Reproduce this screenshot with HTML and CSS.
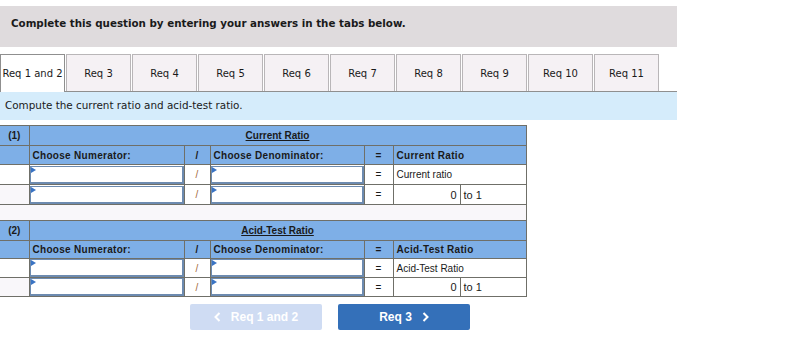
FILE: index.html
```html
<!DOCTYPE html>
<html lang="en">
<head>
  <meta charset="UTF-8">
  <title>Req 1 and 2</title>
  <link rel="stylesheet" href="styles.css">
</head>
<body>
  <div class="page">
    <div class="banner">Complete this question by entering your answers in the tabs below.</div>

    <div class="tabs">
      <div class="tab active">Req 1 and 2</div>
      <div class="tab">Req 3</div>
      <div class="tab">Req 4</div>
      <div class="tab">Req 5</div>
      <div class="tab">Req 6</div>
      <div class="tab">Req 7</div>
      <div class="tab">Req 8</div>
      <div class="tab">Req 9</div>
      <div class="tab">Req 10</div>
      <div class="tab">Req 11</div>
    </div>

    <div class="instructions">Compute the current ratio and acid-test ratio.</div>

    <table class="ratio-table">
      <colgroup>
        <col class="c-label">
        <col class="c-num">
        <col class="c-op">
        <col class="c-den">
        <col class="c-eq">
        <col class="c-val">
        <col class="c-unit">
      </colgroup>
      <tr class="title-row">
        <td class="lbl">(1)</td>
        <td colspan="6" class="title"><u>Current Ratio</u></td>
      </tr>
      <tr class="head-row tall">
        <td></td>
        <td>Choose Numerator:</td>
        <td class="op">/</td>
        <td>Choose Denominator:</td>
        <td class="op">=</td>
        <td colspan="2">Current Ratio</td>
      </tr>
      <tr class="input-row">
        <td></td>
        <td class="field"><div class="select"></div></td>
        <td class="op slash">/</td>
        <td class="field"><div class="select"></div></td>
        <td class="op">=</td>
        <td colspan="2" class="result">Current ratio</td>
      </tr>
      <tr class="input-row">
        <td class="shade"></td>
        <td class="field"><div class="select"></div></td>
        <td class="op slash">/</td>
        <td class="field"><div class="select"></div></td>
        <td class="op">=</td>
        <td class="value">0</td>
        <td class="unit">to 1</td>
      </tr>
      <tr class="spacer"><td colspan="7"></td></tr>
      <tr class="title-row">
        <td class="lbl">(2)</td>
        <td colspan="6" class="title"><u>Acid-Test Ratio</u></td>
      </tr>
      <tr class="head-row">
        <td></td>
        <td>Choose Numerator:</td>
        <td class="op">/</td>
        <td>Choose Denominator:</td>
        <td class="op">=</td>
        <td colspan="2">Acid-Test Ratio</td>
      </tr>
      <tr class="input-row short">
        <td></td>
        <td class="field"><div class="select"></div></td>
        <td class="op slash">/</td>
        <td class="field"><div class="select"></div></td>
        <td class="op">=</td>
        <td colspan="2" class="result">Acid-Test Ratio</td>
      </tr>
      <tr class="input-row short">
        <td class="shade"></td>
        <td class="field"><div class="select"></div></td>
        <td class="op slash">/</td>
        <td class="field"><div class="select"></div></td>
        <td class="op">=</td>
        <td class="value">0</td>
        <td class="unit">to 1</td>
      </tr>
    </table>

    <div class="nav">
      <button class="nav-btn disabled">
        <svg width="7" height="10" viewBox="0 0 7 10"><path d="M5.5 1 L1.5 5 L5.5 9" fill="none" stroke="#fff" stroke-width="2"/></svg>
        <span>Req 1 and 2</span>
      </button>
      <button class="nav-btn">
        <span>Req 3</span>
        <svg width="7" height="10" viewBox="0 0 7 10"><path d="M1.5 1 L5.5 5 L1.5 9" fill="none" stroke="#fff" stroke-width="2"/></svg>
      </button>
    </div>
  </div>
</body>
</html>
```

FILE: styles.css
```css
body {
  margin: 0;
  padding: 0;
  background: #fff;
  font-family: "DejaVu Sans", Verdana, sans-serif;
  color: #222;
}

.page {
  width: 677px;
  padding-top: 6px;
}

.banner {
  background: #dfdbdd;
  height: 41px;
  box-sizing: border-box;
  padding: 11px 11px 0;
  font-size: 10.3px;
  font-weight: bold;
  color: #1a1a1a;
}

.tabs {
  display: flex;
  margin-top: 7px;
  height: 38px;
  border-bottom: 1px solid #8f8f8f;
  box-sizing: border-box;
}

.tab {
  width: 65px;
  margin-right: 1px;
  box-sizing: border-box;
  border: 1px solid #b9b6b8;
  border-bottom: none;
  background: #f5f1f4;
  display: flex;
  align-items: center;
  justify-content: center;
  font-size: 10px;
  color: #1a1a1a;
}

.tab.active {
  background: #fff;
  border-color: #8f8f8f;
  height: 38px;
}

.instructions {
  background: #d5ecfb;
  height: 28px;
  box-sizing: border-box;
  padding: 7px 5px 0;
  font-size: 10.4px;
  color: #1a1a1a;
}

.ratio-table {
  margin-top: 5px;
  border-collapse: collapse;
  width: 526px;
  table-layout: fixed;
  font-family: "Liberation Sans", Arial, sans-serif;
  font-size: 10px;
  color: #1a1a1a;
}

.c-label { width: 29px; }
.c-num { width: 155px; }
.c-op { width: 26px; }
.c-den { width: 154px; }
.c-eq { width: 29px; }
.c-val { width: 67px; }
.c-unit { width: 66px; }

.ratio-table td {
  border: 1px solid #6f6f68;
  padding: 0 3px;
  height: 18px;
  white-space: nowrap;
}

.ratio-table tr > td:first-child {
  border-left: none;
}

.title-row td,
.head-row td {
  background: #7eafe7;
  font-weight: bold;
}

.title-row .lbl {
  text-align: center;
}

.title-row .title {
  text-align: center;
}

.head-row td {
  font-weight: bold;
  letter-spacing: 0.3px;
  height: 17px;
}

.head-row.tall td {
  height: 18px;
}

.title-row td {
  height: 19px;
}

.op {
  text-align: center;
}

.input-row td {
  background: #fff;
  height: 19px;
  font-weight: normal;
}

.input-row.short td {
  height: 16px;
}

.input-row td.shade {
  background: #f9f7fa;
}

.slash {
  color: #a0683a;
}

.field {
  padding: 0 !important;
}

.select {
  position: relative;
  height: 15px;
  border: 1px solid #6d8bb0;
  border-width: 1px 2px 2px 1px;
  background: #fff;
}

.select::before {
  content: "";
  position: absolute;
  left: 0;
  top: 0;
  border-left: 5px solid #3a74c4;
  border-top: 3px solid transparent;
  border-bottom: 3px solid transparent;
}

.result {
  padding-left: 3px;
}

.value {
  text-align: right;
  font-size: 11px;
}

.unit {
  font-size: 11px;
}

.spacer td {
  height: 15px;
  background: #f9f7fa;
  border-left: none;
}

.nav {
  display: flex;
  gap: 16px;
  padding-left: 190px;
  margin-top: 7px;
}

.nav-btn {
  width: 132px;
  height: 26px;
  border: none;
  border-radius: 2px;
  background: #3470b9;
  color: #fff;
  font-family: "Liberation Sans", Arial, sans-serif;
  font-size: 12px;
  font-weight: bold;
  display: flex;
  align-items: center;
  justify-content: center;
  gap: 10px;
  cursor: pointer;
}

.nav-btn.disabled {
  background: #cfdcf3;
  cursor: default;
}
```
